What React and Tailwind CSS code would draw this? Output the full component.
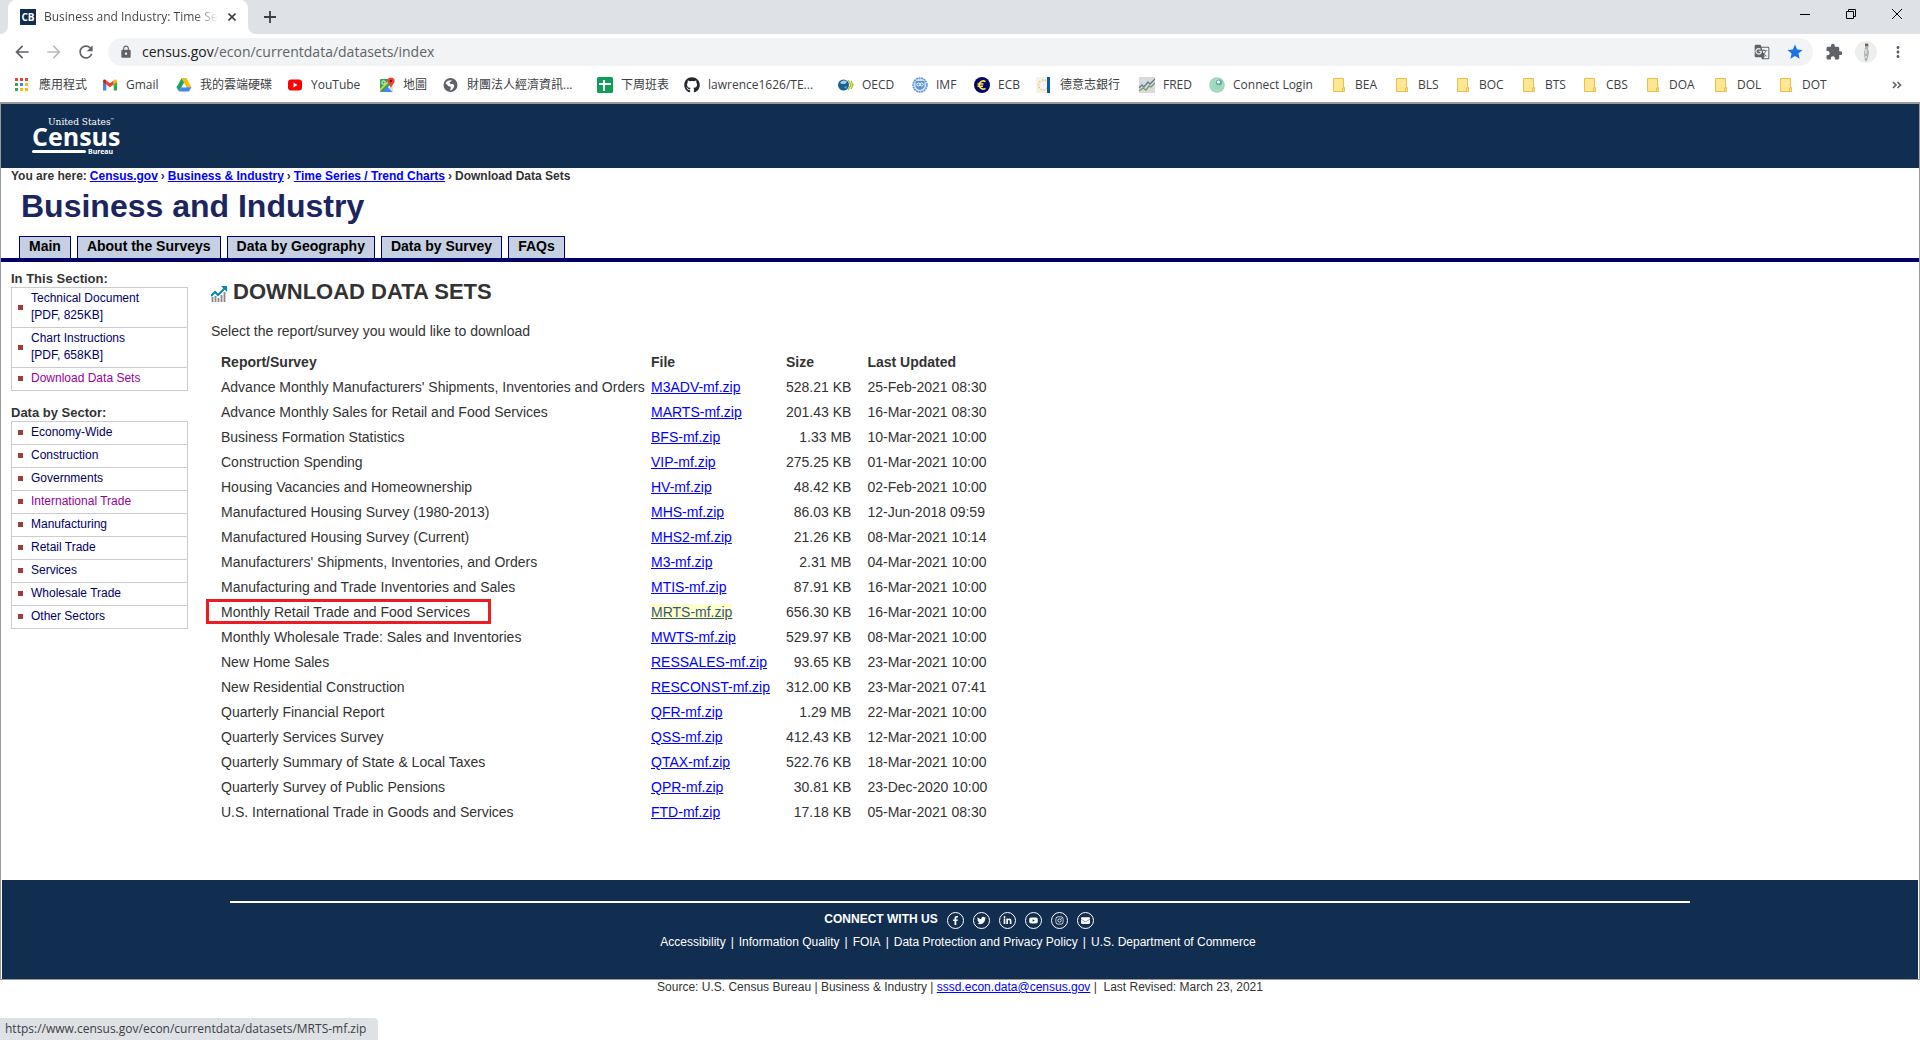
import React from "react";
import { FaFacebookF, FaTwitter, FaLinkedinIn, FaYoutube, FaInstagram, FaGithub, FaEnvelope } from "react-icons/fa";
import { MdArrowBack, MdArrowForward, MdRefresh, MdLock, MdStar, MdExtension, MdMoreVert, MdGTranslate } from "react-icons/md";

const UI = "font-['Open_Sans','Noto_Sans_CJK_TC',sans-serif]";

function AppsIcon() {
  const colors = ["#ea4335", "#ea4335", "#ea4335", "#34a853", "#4285f4", "#fbbc04", "#34a853", "#fbbc04", "#fbbc04"];
  return (
    <svg viewBox="0 0 16 16" className="size-4">
      {colors.map((c, i) => (
        <rect key={i} x={(i % 3) * 5} y={1 + Math.floor(i / 3) * 5} width="3" height="3" fill={c} />
      ))}
    </svg>
  );
}
function GmailIcon() {
  return (
    <svg viewBox="0 0 16 16" className="size-4">
      <path d="M1 13.500V4l3.300 2.500v7z" fill="#4285f4" />
      <path d="M11.700 13.500V6.500L15 4v9.500z" fill="#34a853" />
      <path d="M4.300 3.500 8 6.300l3.700-2.800v4L8 10.300 4.300 7.500z" fill="#ea4335" />
      <path d="M1 5V4c0-1.400 1.700-2 2.700-1l.6.500v4z" fill="#c5221f" />
      <path d="M15 5V4c0-1.400-1.700-2-2.700-1l-.6.500v4z" fill="#fbbc04" />
    </svg>
  );
}
function DriveIcon() {
  return (
    <svg viewBox="0 0 16 16" className="size-4">
      <path d="M5.500 1.500h5L8 6 3 14.500 0.500 10.200z" fill="#1fa463" />
      <path d="M5.500 1.500h5l5 8.700h-5z" fill="#fbbc04" />
      <path d="M5.300 10.200h10.200l-2.700 4.300H3z" fill="#4285f4" />
      <path d="M8 6.200 5.700 10.200h4.600z" fill="#fff" />
    </svg>
  );
}
function YouTubeIcon() {
  return (
    <svg viewBox="0 0 16 16" className="size-4">
      <rect x="1" y="2.500" width="14" height="11" rx="3" fill="#f00" />
      <path d="M6.500 5.500v5l4-2.500z" fill="#fff" />
    </svg>
  );
}
function MapsIcon() {
  return (
    <svg viewBox="0 0 16 16" className="size-4">
      <rect x="1" y="2" width="13" height="13" rx="1" fill="#34a853" />
      <path d="M14 5 4 15h9a1 1 0 0 0 1-1z" fill="#dfe3e6" />
      <path d="M8 9.500 13.500 15H3z" fill="#4285f4" />
      <path d="M1 12 11 2h2L1 14z" fill="#fdd835" />
      <circle cx="4.500" cy="5.500" r="1.700" fill="none" stroke="#fff" />
      <path d="M12 .5a3.600 3.600 0 0 1 3.600 3.600c0 2.500-3 4-3.600 7.400-.6-3.400-3.600-4.900-3.600-7.400A3.600 3.600 0 0 1 12 .5z" fill="#ea4335" />
      <circle cx="12" cy="4" r="1.300" fill="#811411" />
    </svg>
  );
}
function GlobeIcon() {
  return (
    <svg viewBox="0 0 16 16" className="size-4">
      <circle cx="7.500" cy="8" r="7" fill="#5f6368" />
      <path d="M2.500 6.500c1-3 4-3.700 6.300-3.200-.3 1.500-1.500 1.400-2.300 2.200 0 1.200 1.300 1.500 3 1.500 1.800.2 2 2 1.300 3.200-.8 1.400-1.600 2.800-3.500 3.200-.3-1.300.6-1.800.6-3-.3-.9-1.600-.9-2.600-1.400-1-.8-1.300-2-2.800-2.500z" fill="#fff" />
    </svg>
  );
}
function SheetsIcon() {
  return (
    <svg viewBox="0 0 16 16" className="size-4">
      <rect width="16" height="16" rx="1.500" fill="#0f9d58" />
      <path d="M6 3h2v3h6v2H8v6H6V8H2V6h4z" fill="#fff" />
    </svg>
  );
}
function GithubIcon() {
  return <FaGithub className="size-4 text-[#24292e]" />;
}
function OecdIcon() {
  return (
    <svg viewBox="0 0 16 16" className="size-4">
      <circle cx="5.500" cy="8" r="5.500" fill="#1b5f93" />
      <path d="M2 6c2-3 5-3 7-1L7 7 4 7z" fill="#a9cbe2" />
      <path d="M6 10l3-1-1 3z" fill="#6fa5cb" />
      <path d="M10 3l3 5-3 5M13 4l2 4-2 4" fill="none" stroke="#a7c524" strokeWidth="1.400" />
    </svg>
  );
}
function ImfIcon() {
  return (
    <svg viewBox="0 0 16 16" className="size-4">
      <circle cx="8" cy="8" r="7" fill="#cfe0f5" stroke="#5a93d2" strokeWidth="1.500" strokeDasharray="2 .6" />
      <path d="M3.500 4h9v5c0 2-2.500 3-4.500 4-2-1-4.500-2-4.500-4z" fill="#5a93d2" />
      <circle cx="6.300" cy="7.500" r="1.500" fill="none" stroke="#fff" />
      <circle cx="9.700" cy="7.500" r="1.500" fill="none" stroke="#fff" />
    </svg>
  );
}
function EcbIcon() {
  return (
    <svg viewBox="0 0 16 16" className="size-4">
      <circle cx="8" cy="8" r="8" fill="#06066b" />
      <path d="M11.500 4.700A4 4 0 1 0 11.500 11.300M3.500 7h6M3.500 9.200h5.500" fill="none" stroke="#ffe93b" strokeWidth="1.600" />
    </svg>
  );
}
function BundesbankIcon() {
  return (
    <svg viewBox="0 0 16 16" className="size-4">
      <rect width="11" height="16" fill="#f2f3f5" />
      <circle cx="7.500" cy="8" r="5" fill="none" stroke="#f3cf5b" strokeWidth="1.800" strokeDasharray="1.600 1.400" />
      <rect x="11" width="3" height="16" fill="#0a5ba5" />
    </svg>
  );
}
function FredIcon() {
  return (
    <svg viewBox="0 0 16 16" className="size-4">
      <rect width="16" height="16" fill="#d9dadb" />
      <path d="M0 11l3-3 2 2 4-5 2 2 5-5" fill="none" stroke="#5d7d97" strokeWidth="1.400" />
      <path d="M0 14l4-3 3 2 3-4 2 1 4-4" fill="none" stroke="#7c9c60" strokeWidth="1.400" />
    </svg>
  );
}
function ConnectIcon() {
  return (
    <svg viewBox="0 0 16 16" className="size-4">
      <circle cx="8" cy="8" r="7.800" fill="#9dd8bd" />
      <circle cx="8" cy="8" r="5.500" fill="none" stroke="#c5e9d8" strokeDasharray="1 1" />
      <circle cx="10" cy="5.500" r="3" fill="#5fae9d" />
      <circle cx="9.500" cy="5" r="1.600" fill="#fff" />
    </svg>
  );
}
function FolderIcon() {
  return (
    <svg viewBox="0 0 16 16" className="size-4">
      <path d="M2.500 1.500h10v9h1v4h-11z" fill="#ffe693" stroke="#e8c14d" />
      <path d="M11.500 14.500v-3.500h2" fill="none" stroke="#e8c14d" />
    </svg>
  );
}

const bookmarks = [
  ["應用程式", AppsIcon, "w-[87px]"],
  ["Gmail", GmailIcon, "w-[74px]"],
  ["我的雲端硬碟", DriveIcon, "w-[111px]"],
  ["YouTube", YouTubeIcon, "w-[92px]"],
  ["地圖", MapsIcon, "w-[64px]"],
  ["財團法人經濟資訊...", GlobeIcon, "w-[154px]"],
  ["下周班表", SheetsIcon, "w-[87px]"],
  ["lawrence1626/TE...", GithubIcon, "w-[154px]"],
  ["OECD", OecdIcon, "w-[74px]"],
  ["IMF", ImfIcon, "w-[62px]"],
  ["ECB", EcbIcon, "w-[62px]"],
  ["德意志銀行", BundesbankIcon, "w-[103px]"],
  ["FRED", FredIcon, "w-[70px]"],
  ["Connect Login", ConnectIcon, "w-[122px]"],
  ["BEA", FolderIcon, "w-[63px]"],
  ["BLS", FolderIcon, "w-[61px]"],
  ["BOC", FolderIcon, "w-[66px]"],
  ["BTS", FolderIcon, "w-[61px]"],
  ["CBS", FolderIcon, "w-[63px]"],
  ["DOA", FolderIcon, "w-[68px]"],
  ["DOL", FolderIcon, "w-[65px]"],
  ["DOT", FolderIcon, "w-[63px]"],
];

function Browser() {
  return (
    <header className={`${UI} text-[#3c4043]`}>
      <div className="flex h-[34px] items-start bg-[#dee1e6]">
        <span className="size-2 self-end bg-white"><span className="block size-2 rounded-br-lg bg-[#dee1e6]" /></span>
        <div className="flex h-[34px] w-[240px] items-center rounded-t-lg bg-white pl-3">
          <span className="flex size-4 shrink-0 items-center justify-center bg-[#112e51] text-[10px] font-bold text-white">CB</span>
          <span className="ml-2 w-[175px] overflow-hidden whitespace-nowrap bg-linear-to-r from-[#3c4043] from-85% to-transparent bg-clip-text text-xs text-transparent">
            Business and Industry: Time Series
          </span>
          <button aria-label="Close tab" className="ml-[5px] flex size-4 items-center justify-center">
            <svg viewBox="0 0 8 8" className="size-2"><path d="M.5.500l7 7M7.500.500l-7 7" stroke="#3c4043" strokeWidth="1.600" /></svg>
          </button>
        </div>
        <span className="size-2 self-end bg-white"><span className="block size-2 rounded-bl-lg bg-[#dee1e6]" /></span>
        <button aria-label="New tab" className="mt-[11px] ml-2">
          <svg viewBox="0 0 12 12" className="size-3"><path d="M6 0v12M0 6h12" stroke="#3c4043" strokeWidth="1.800" /></svg>
        </button>
        <div className="ml-auto flex h-7 items-center gap-9 pr-[18px]">
          <button aria-label="Minimize"><svg viewBox="0 0 10 10" className="size-[10px]"><path d="M0 5.500h10" stroke="#000" /></svg></button>
          <button aria-label="Restore"><svg viewBox="0 0 10 10" className="size-[10px]"><path d="M.5 2.500h7v7h-7zM2.500 2.500v-2h7v7h-2" fill="none" stroke="#000" /></svg></button>
          <button aria-label="Close"><svg viewBox="0 0 10 10" className="size-[10px]"><path d="M0 0l10 10M10 0L0 10" stroke="#000" /></svg></button>
        </div>
      </div>
      <div className="flex h-9 items-center bg-white pl-3 text-[#5f6368]">
        <button aria-label="Back"><MdArrowBack className="size-5" /></button>
        <button aria-label="Forward" className="ml-3 text-[#babcbe]"><MdArrowForward className="size-5" /></button>
        <button aria-label="Reload" className="ml-3"><MdRefresh className="size-5" /></button>
        <div className="ml-3 flex h-7 flex-1 items-center rounded-full bg-[#f1f3f4] pr-[9px] pl-[11px]">
          <MdLock className="size-[14px]" />
          <div className="ml-[9px] flex-1 text-sm"><span className="text-[#202124]">census.gov</span>/econ/currentdata/datasets/index</div>
          <button aria-label="Translate"><MdGTranslate className="size-4" /></button>
          <button aria-label="Bookmark" className="ml-4 text-[#1a73e8]"><MdStar className="size-[18px]" /></button>
        </div>
        <button aria-label="Extensions" className="ml-3"><MdExtension className="size-[18px]" /></button>
        <button aria-label="Profile" className="ml-3 flex size-[22px] items-center justify-center rounded-full bg-[#eeeeee]">
          <svg viewBox="0 0 8 18" className="h-[18px] w-2">
            <path d="M3 0h3l1 3-1 2 1 5-2 8H3L2 10l1-5z" fill="#aab4b2" />
            <path d="M3 1h3v2H3z" fill="#7b5a48" />
            <path d="M4 6v5M3 14h2" stroke="#f7f7f7" />
          </svg>
        </button>
        <button aria-label="Menu" className="mr-[13px] ml-3"><MdMoreVert className="size-[18px]" /></button>
      </div>
      <nav className="flex h-8 items-center bg-white pb-[3px] pl-[15px] text-xs">
        {bookmarks.map(([label, Icon, width]) => (
          <a key={label} href="#" className={`${width} flex shrink-0 items-center gap-2 whitespace-nowrap`}>
            <Icon />
            {label}
          </a>
        ))}
        <button aria-label="More bookmarks" className="mr-[18px] ml-auto">
          <svg viewBox="0 0 10 8" className="h-2 w-[10px]"><path d="M1 1l3 3-3 3M5.500 1l3 3-3 3" fill="none" stroke="#5f6368" strokeWidth="1.600" /></svg>
        </button>
      </nav>
    </header>
  );
}

function CensusLogo() {
  return (
    <a href="#" className="ml-[31px] flex flex-col text-white">
      <span className="ml-4 flex font-['DejaVu_Serif_Condensed','DejaVu_Serif',serif] text-[10px] leading-[10px]">
        United States<span className="text-[4px] leading-[6px]">™</span>
      </span>
      <span className="font-['Open_Sans',sans-serif] text-[25px] leading-[19px] font-bold">Census</span>
      <span className="mt-[2px] flex items-center gap-[2px] font-['Noto_Sans',sans-serif] text-[7px] leading-[7px] font-bold">
        <span className="h-[3px] w-[54px] rounded-full bg-white" />
        Bureau
      </span>
    </a>
  );
}

const tabs = ["Main", "About the Surveys", "Data by Geography", "Data by Survey", "FAQs"];

function SideList({ title, items }) {
  return (
    <section className="mb-[14px]">
      <h2 className="text-[13px] leading-4 font-bold text-[#333]">{title}</h2>
      <ul className="border border-[#ccc]">
        {items.map((item) => (
          <li key={item.text} className="flex items-center gap-2 border-b border-[#ccc] px-[6px] pt-[2px] pb-[3px] last:border-b-0">
            <span className="size-[5px] shrink-0 bg-[#a03d3a]" />
            <a href="#" className={item.visited ? "text-[#909]" : "text-[#006]"}>
              {item.text}
              {item.note && <span className="block">{item.note}</span>}
            </a>
          </li>
        ))}
      </ul>
    </section>
  );
}

const sectionLinks = [
  { text: "Technical Document", note: "[PDF, 825KB]" },
  { text: "Chart Instructions", note: "[PDF, 658KB]" },
  { text: "Download Data Sets", visited: true },
];
const sectors = [
  { text: "Economy-Wide" },
  { text: "Construction" },
  { text: "Governments" },
  { text: "International Trade", visited: true },
  { text: "Manufacturing" },
  { text: "Retail Trade" },
  { text: "Services" },
  { text: "Wholesale Trade" },
  { text: "Other Sectors" },
];

const rows = [
  ["Advance Monthly Manufacturers' Shipments, Inventories and Orders", "M3ADV-mf.zip", "528.21 KB", "25-Feb-2021 08:30"],
  ["Advance Monthly Sales for Retail and Food Services", "MARTS-mf.zip", "201.43 KB", "16-Mar-2021 08:30"],
  ["Business Formation Statistics", "BFS-mf.zip", "1.33 MB", "10-Mar-2021 10:00"],
  ["Construction Spending", "VIP-mf.zip", "275.25 KB", "01-Mar-2021 10:00"],
  ["Housing Vacancies and Homeownership", "HV-mf.zip", "48.42 KB", "02-Feb-2021 10:00"],
  ["Manufactured Housing Survey (1980-2013)", "MHS-mf.zip", "86.03 KB", "12-Jun-2018 09:59"],
  ["Manufactured Housing Survey (Current)", "MHS2-mf.zip", "21.26 KB", "08-Mar-2021 10:14"],
  ["Manufacturers' Shipments, Inventories, and Orders", "M3-mf.zip", "2.31 MB", "04-Mar-2021 10:00"],
  ["Manufacturing and Trade Inventories and Sales", "MTIS-mf.zip", "87.91 KB", "16-Mar-2021 10:00"],
  ["Monthly Retail Trade and Food Services", "MRTS-mf.zip", "656.30 KB", "16-Mar-2021 10:00"],
  ["Monthly Wholesale Trade: Sales and Inventories", "MWTS-mf.zip", "529.97 KB", "08-Mar-2021 10:00"],
  ["New Home Sales", "RESSALES-mf.zip", "93.65 KB", "23-Mar-2021 10:00"],
  ["New Residential Construction", "RESCONST-mf.zip", "312.00 KB", "23-Mar-2021 07:41"],
  ["Quarterly Financial Report", "QFR-mf.zip", "1.29 MB", "22-Mar-2021 10:00"],
  ["Quarterly Services Survey", "QSS-mf.zip", "412.43 KB", "12-Mar-2021 10:00"],
  ["Quarterly Summary of State & Local Taxes", "QTAX-mf.zip", "522.76 KB", "18-Mar-2021 10:00"],
  ["Quarterly Survey of Public Pensions", "QPR-mf.zip", "30.81 KB", "23-Dec-2020 10:00"],
  ["U.S. International Trade in Goods and Services", "FTD-mf.zip", "17.18 KB", "05-Mar-2021 08:30"],
];
const ACTIVE_FILE = "MRTS-mf.zip";

function DataSets() {
  return (
    <table className="mt-[10px] ml-[10px] text-left leading-[25px]">
      <thead>
        <tr>
          <th className="w-[430px] p-0">Report/Survey</th>
          <th className="w-[135px] p-0">File</th>
          <th className="w-[63px] p-0">Size</th>
          <th className="p-0 pl-4">Last Updated</th>
        </tr>
      </thead>
      <tbody>
        {rows.map(([name, file, size, updated]) => {
          const active = file === ACTIVE_FILE;
          return (
            <tr key={file}>
              <td className="relative p-0 whitespace-nowrap">
                {name}
                {active && <span className="absolute -top-px -left-[15px] h-[25px] w-[285px] border-3 border-[#ed1c24]" />}
              </td>
              <td className="p-0">
                <a href="#" className={active ? "bg-[#ffffcc] text-[#36597b] underline" : "text-[#00f] underline"}>{file}</a>
              </td>
              <td className="p-0 text-right whitespace-nowrap">{size}</td>
              <td className="p-0 pl-4 whitespace-nowrap">{updated}</td>
            </tr>
          );
        })}
      </tbody>
    </table>
  );
}

const social = [
  ["Facebook", FaFacebookF],
  ["Twitter", FaTwitter],
  ["LinkedIn", FaLinkedinIn],
  ["YouTube", FaYoutube],
  ["Instagram", FaInstagram],
  ["Email", FaEnvelope],
];
const legal = ["Accessibility", "Information Quality", "FOIA", "Data Protection and Privacy Policy", "U.S. Department of Commerce"];

function Footer() {
  return (
    <footer className="mx-px mt-[55px] h-[99px] bg-[#112e51] pt-[21px] text-xs text-white">
      <div className="mx-[11.9%] h-[2px] bg-white" />
      <div className="mt-2 flex h-[18px] justify-center gap-[9px] pr-[2px] text-xs leading-4 font-bold">
        CONNECT WITH US
        {social.map(([label, Icon]) => (
          <a key={label} href="#" aria-label={label} className="mt-px flex size-[17px] items-center justify-center rounded-full border border-white">
            <Icon className="size-[9px]" />
          </a>
        ))}
      </div>
      <div className="mt-[5px] flex justify-center pr-1 leading-4">
        {legal.map((label, i) => (
          <React.Fragment key={label}>
            {i > 0 && <span className="px-[5px]">|</span>}
            <a href="#">{label}</a>
          </React.Fragment>
        ))}
      </div>
    </footer>
  );
}

export default function App() {
  return (
    <div className="flex min-h-screen flex-col bg-white">
      <Browser />
      <div className="border border-t-2 border-[#999] font-['Liberation_Sans',sans-serif] text-xs text-[#333]">
        <div className="flex h-16 items-center bg-[#112e51]">
          <CensusLogo />
        </div>
        <nav className="flex gap-[3px] pl-[10px] leading-4 font-bold">
          <span>You are here:</span>
          <a href="#" className="text-[#00f] underline">Census.gov</a>
          <span>›</span>
          <a href="#" className="text-[#00f] underline">Business &amp; Industry</a>
          <span>›</span>
          <a href="#" className="text-[#00f] underline">Time Series / Trend Charts</a>
          <span>›</span>
          <span>Download Data Sets</span>
        </nav>
        <h1 className="mt-[3px] pl-5 text-[32px] leading-[38px] font-bold text-[#1b2560]">Business and Industry</h1>
        <nav className="mt-[11px] flex gap-[6px] border-b-4 border-[#006] pl-[18px]">
          {tabs.map((tab) => (
            <a key={tab} href="#" className="border border-b-0 border-[#006] bg-[#c5d1e3] px-[9px] pb-[3px] text-sm leading-[18px] font-bold text-black">{tab}</a>
          ))}
        </nav>
        <div className="flex">
          <aside className="mt-[9px] ml-[10px] w-[177px] shrink-0 leading-[17px]">
            <SideList title="In This Section:" items={sectionLinks} />
            <SideList title="Data by Sector:" items={sectors} />
          </aside>
          <main className="ml-[23px] text-sm">
            <h2 className="mt-[17px] flex items-center gap-[6px] text-[22px] leading-[26px] font-bold">
              <svg viewBox="0 0 16 16" className="mt-[3px] size-4">
                <path d="M1.500 16v-5M4.500 16v-6M7.500 16v-4M10.500 16V9M13.500 16V6" stroke="#888" strokeWidth="1.800" />
                <path d="M0 10l4-4 3 3 7-7" fill="none" stroke="#0a86b8" strokeWidth="2" />
                <path d="M10 0h6v6z" fill="#0a86b8" />
              </svg>
              DOWNLOAD DATA SETS
            </h2>
            <p className="mt-[17px] leading-[18px]">Select the report/survey you would like to download</p>
            <DataSets />
          </main>
        </div>
        <Footer />
      </div>
      <div className="flex justify-center font-['Liberation_Sans',sans-serif] text-xs leading-[14px] whitespace-pre text-[#333]">
        <span>Source: U.S. Census Bureau | Business &amp; Industry | </span>
        <a href="#" className="text-[#00f] underline">sssd.econ.data@census.gov</a>
        <span> |  Last Revised: March 23, 2021</span>
      </div>
      <div className={`${UI} mt-auto self-start rounded-tr bg-[#dee1e6] py-[2px] pr-3 pl-[5px] text-xs leading-[18px] text-[#3c4043]`}>
        https://www.census.gov/econ/currentdata/datasets/MRTS-mf.zip
      </div>
    </div>
  );
}
